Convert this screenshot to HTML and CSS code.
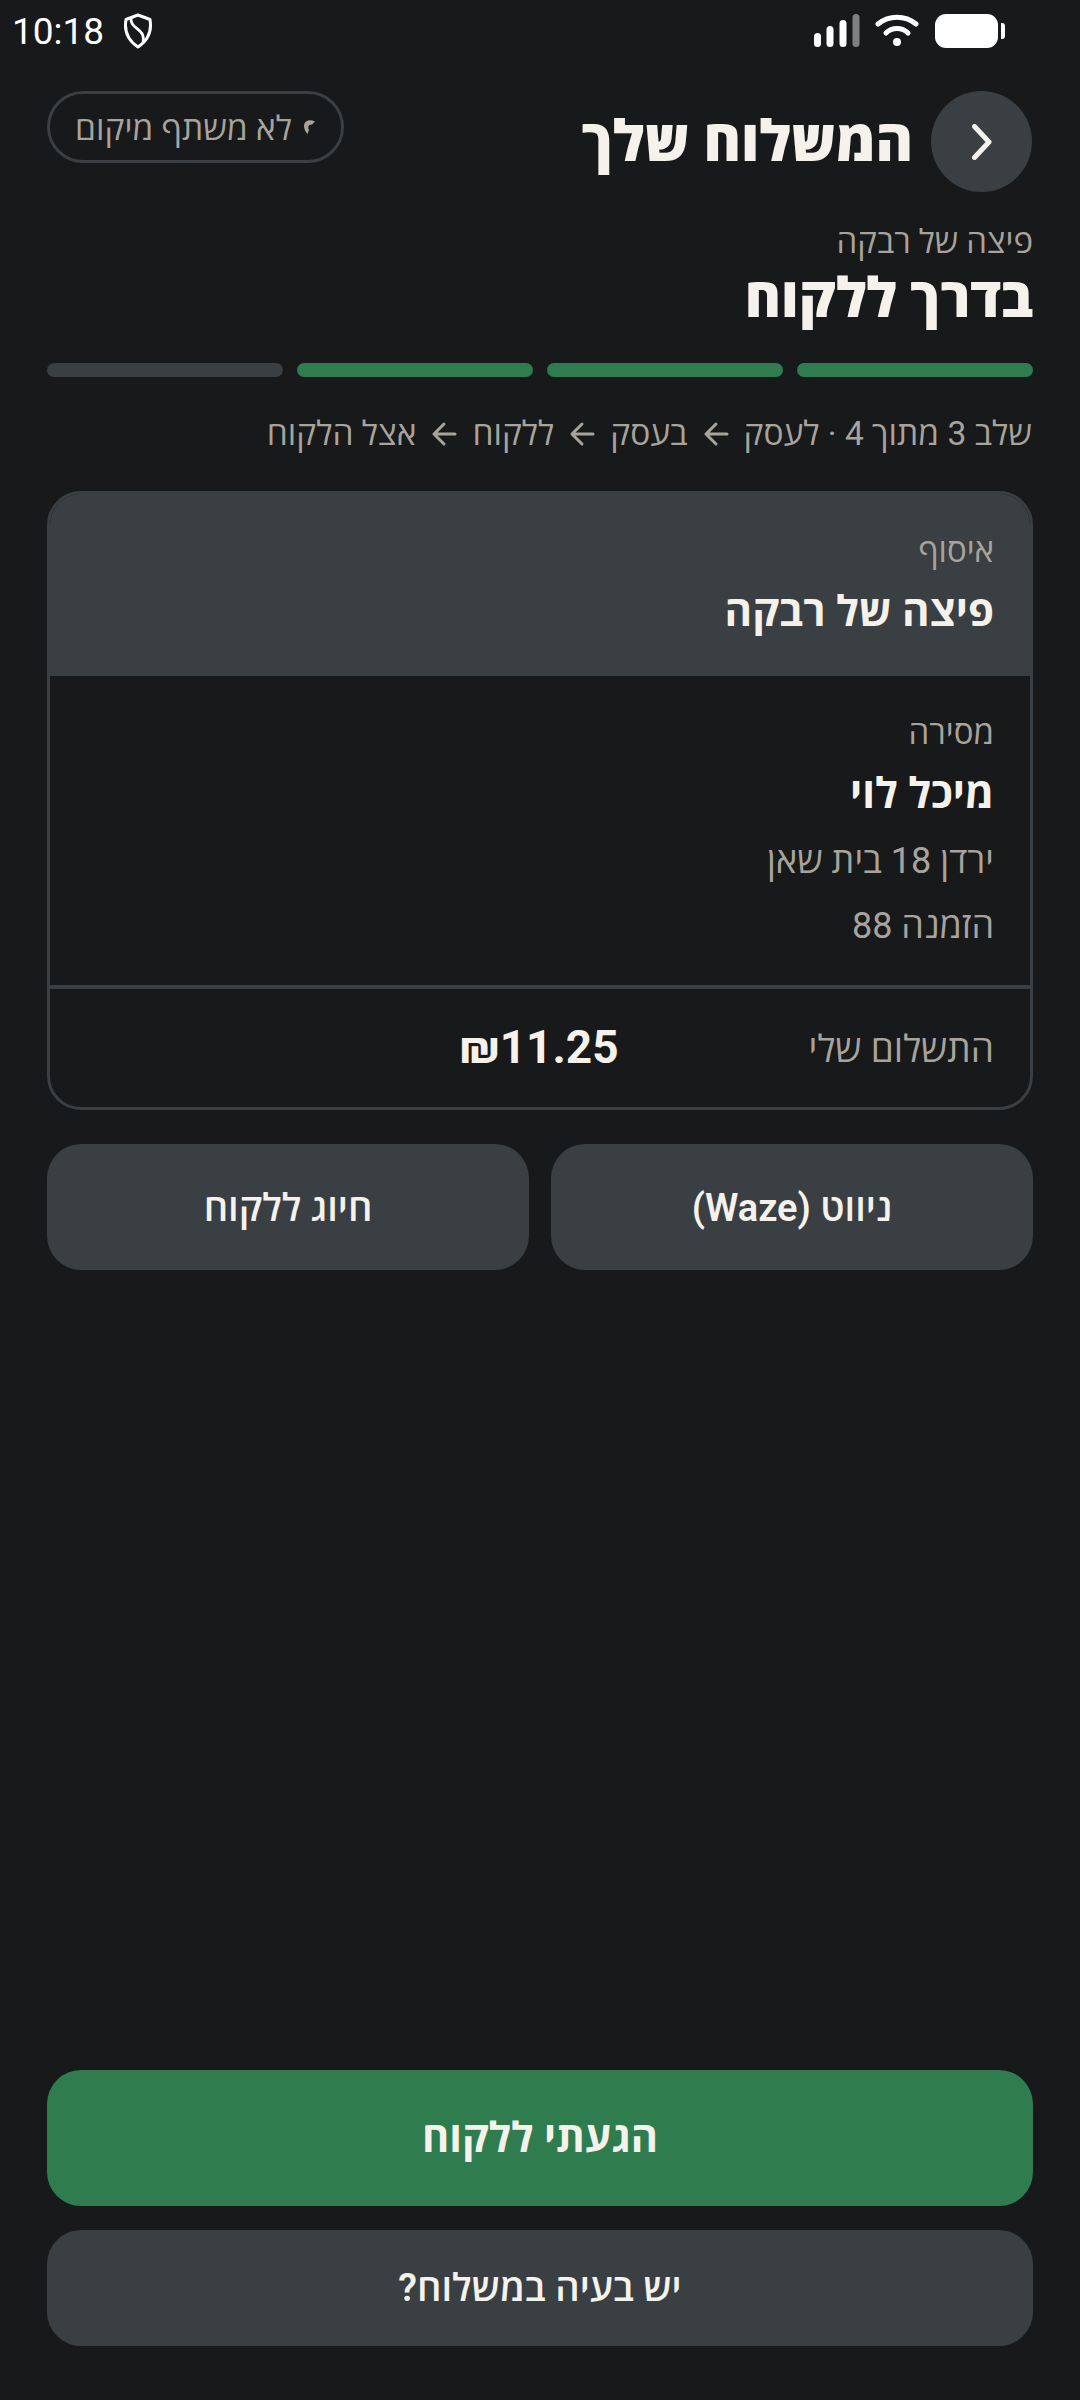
FILE: index.html
```html
<!DOCTYPE html>
<html lang="he" dir="rtl">
<head>
  <meta charset="UTF-8" />
  <meta name="viewport" content="width=device-width, initial-scale=1.0"/>
  <title>המשלוח שלך</title>
  <link rel="stylesheet" href="styles.css">
</head>
<body>

  <div class="status-bar" dir="ltr">
    <div class="status-left">
      <span class="clock">10:18</span>
      <svg class="shield" viewBox="0 0 30 36" fill="none" stroke="#fff" stroke-width="3" stroke-linejoin="round">
        <path d="M15 2 L27 6.5 C28.500 15 27 26 15 34 C3 26 1.500 15 3 6.500 Z"/>
        <path d="M8 5 C7 17 23 14 20 30" stroke-width="2.800"/>
      </svg>
    </div>
    <div class="status-right">
      <svg class="signal" viewBox="0 0 46 34">
        <rect x="0" y="19" width="7" height="14" rx="3.500" fill="#fff"/>
        <rect x="12.500" y="12" width="7" height="21" rx="3.500" fill="#fff"/>
        <rect x="25.500" y="6" width="7" height="27" rx="3.500" fill="#fff"/>
        <rect x="38.500" y="0" width="7" height="33" rx="3.500" fill="#808080"/>
      </svg>
      <svg class="wifi" viewBox="0 0 44 34" fill="none" stroke="#fff" stroke-width="5" stroke-linecap="round">
        <path d="M3 10 C14 1 30 1 41 10"/>
        <path d="M11 19 C17 13 27 13 33 19"/>
        <circle cx="22" cy="28" r="4" fill="#fff" stroke="none"/>
      </svg>
      <div class="battery"></div>
      <div class="battery-cap"></div>
    </div>
  </div>

  <header class="top-row">
    <button class="back-btn">
      <svg viewBox="0 0 20 36" fill="none" stroke="#f5f2ec" stroke-width="5" stroke-linecap="round" stroke-linejoin="round">
        <path d="M2.500 2.500 L17 18 L2.500 33.500"/>
      </svg>
    </button>
    <h1>המשלוח שלך</h1>
    <div class="location-pill">
      <svg class="pin" viewBox="0 0 12 16" fill="#a8a39b">
        <path d="M11 2.500 C5 -0.500 0 2 0 7 C0 10 1.500 13 3.500 15 L5 11 C3.500 8 4.500 5.500 8 5.500 Z"/>
      </svg>
      <span>לא משתף מיקום</span>
    </div>
  </header>

  <section class="status-block">
    <p class="shop-name">פיצה של רבקה</p>
    <h2>בדרך ללקוח</h2>
    <div class="progress">
      <div class="segment done"></div>
      <div class="segment done"></div>
      <div class="segment done"></div>
      <div class="segment"></div>
    </div>
    <p class="steps">
      <span>שלב 3 מתוך 4 · לעסק</span>
      <svg class="arrow" viewBox="0 0 26 26"><path d="M24 13 H3 M13 3 L3 13 L13 23"/></svg>
      <span>בעסק</span>
      <svg class="arrow" viewBox="0 0 26 26"><path d="M24 13 H3 M13 3 L3 13 L13 23"/></svg>
      <span>ללקוח</span>
      <svg class="arrow" viewBox="0 0 26 26"><path d="M24 13 H3 M13 3 L3 13 L13 23"/></svg>
      <span>אצל הלקוח</span>
    </p>
  </section>

  <section class="card">
    <div class="card-pickup">
      <p class="card-label">איסוף</p>
      <p class="card-name">פיצה של רבקה</p>
    </div>
    <div class="card-delivery">
      <p class="card-label">מסירה</p>
      <p class="card-name">מיכל לוי</p>
      <p class="card-detail">ירדן 18 בית שאן</p>
      <p class="card-detail">הזמנה 88</p>
    </div>
    <div class="card-pay">
      <span class="pay-label">התשלום שלי</span>
      <span class="pay-value" dir="ltr">₪11.25</span>
    </div>
  </section>

  <div class="action-row">
    <button class="btn-gray">ניווט (Waze)</button>
    <button class="btn-gray">חיוג ללקוח</button>
  </div>

  <div class="bottom-actions">
    <button class="btn-main">הגעתי ללקוח</button>
    <button class="btn-issue">יש בעיה במשלוח?</button>
  </div>

</body>
</html>
```

FILE: styles.css
```css
* {
  box-sizing: border-box;
}

html,
body {
  margin: 0;
  padding: 0;
  height: 2400px;
}

body {
  background: #17191b;
  color: #f5f2ec;
  font-family: Roboto, "Open Sans", sans-serif;
  display: flex;
  flex-direction: column;
  padding: 0 47px 54px;
  overflow: hidden;
}

p,
h1,
h2 {
  margin: 0;
}

button {
  font-family: inherit;
  border: none;
  color: #f5f2ec;
}

/* status bar */
.status-bar {
  display: flex;
  justify-content: space-between;
  align-items: center;
  height: 60px;
  margin: 0 -47px;
  padding: 2px 75px 0 12px;
  color: #fff;
}

.status-left,
.status-right {
  display: flex;
  align-items: center;
}

.clock {
  font-size: 37px;
  font-weight: 400;
}

.shield {
  width: 30px;
  height: 36px;
  margin-left: 19px;
}

.signal {
  width: 46px;
  height: 34px;
}

.wifi {
  width: 44px;
  height: 34px;
  margin-left: 15px;
}

.battery {
  width: 63px;
  height: 34px;
  margin-left: 16px;
  background: #fff;
  border-radius: 11px;
}

.battery-cap {
  width: 4px;
  height: 16px;
  margin-left: 3px;
  background: #fff;
  border-radius: 0 3px 3px 0;
}

/* header */
.top-row {
  display: flex;
  align-items: flex-start;
  gap: 18px;
  margin-top: 31px;
  padding-right: 1px;
}

.back-btn {
  width: 101px;
  height: 101px;
  border-radius: 50%;
  background: #3a3f43;
  padding: 0;
  display: flex;
  align-items: center;
  justify-content: center;
}

.back-btn svg {
  width: 20px;
  height: 36px;
}

.top-row h1 {
  font-size: 57px;
  font-weight: 800;
  line-height: 101px;
}

.location-pill {
  margin-right: auto;
  height: 72px;
  width: 297px;
  border: 3px solid #3a3f43;
  border-radius: 36px;
  display: flex;
  align-items: center;
  justify-content: center;
  gap: 12px;
  color: #a8a39b;
  font-size: 33.500px;
}

.pin {
  width: 12px;
  height: 16px;
}

/* status */
.status-block {
  margin-top: 30px;
}

.shop-name {
  font-size: 33px;
  line-height: 40px;
  color: #a8a39b;
}

.status-block h2 {
  font-size: 55px;
  font-weight: 800;
  line-height: 66px;
  margin-top: 3px;
}

.progress {
  display: grid;
  grid-template-columns: repeat(4, 1fr);
  gap: 14px;
  margin-top: 32px;
}

.segment {
  height: 14px;
  border-radius: 7px;
  background: #3a3f43;
}

.segment.done {
  background: #2f7d4f;
}

.steps {
  margin-top: 37px;
  font-size: 33.500px;
  line-height: 40px;
  color: #a8a39b;
  display: flex;
  align-items: center;
  gap: 15px;
  padding-right: 1px;
}

.arrow {
  width: 26px;
  height: 26px;
  fill: none;
  stroke: #a8a39b;
  stroke-width: 3;
  stroke-linecap: round;
  stroke-linejoin: round;
}

/* card */
.card {
  margin-top: 37px;
  border: 3px solid #3a3f43;
  border-radius: 34px;
  overflow: hidden;
}

.card-pickup {
  background: #3a3f43;
  height: 182px;
  padding: 37px 36px 0;
}

.card-delivery {
  height: 313px;
  padding: 37px 36px 0;
  border-bottom: 4px solid #3a3f43;
}

.card-label {
  font-size: 33px;
  line-height: 40px;
  color: #a8a39b;
}

.card-name {
  font-size: 42px;
  font-weight: 700;
  line-height: 50px;
  margin-top: 16px;
}

.card-detail {
  font-size: 36px;
  line-height: 44px;
  color: #a8a39b;
  margin-top: 21px;
}

.card-name + .card-detail {
  margin-top: 20px;
}

.card-pay {
  display: flex;
  align-items: center;
  height: 118px;
  padding: 0 36px 2px;
  gap: 190px;
}

.pay-label {
  font-size: 37px;
  color: #a8a39b;
}

.pay-value {
  font-size: 46px;
  font-weight: 700;
}

/* buttons */
.action-row {
  display: grid;
  grid-template-columns: 1fr 1fr;
  gap: 22px;
  margin-top: 34px;
}

.btn-gray {
  height: 126px;
  border-radius: 34px;
  background: #3a3f43;
  font-size: 38px;
  font-weight: 600;
  padding-bottom: 4px;
}

.bottom-actions {
  margin-top: auto;
  display: flex;
  flex-direction: column;
  gap: 24px;
}

.btn-main {
  height: 136px;
  border-radius: 34px;
  background: #2f7d4f;
  font-size: 41.500px;
  font-weight: 700;
  padding-bottom: 6px;
}

.btn-issue {
  height: 116px;
  border-radius: 34px;
  background: #3a3f43;
  font-size: 38px;
  font-weight: 600;
  padding-bottom: 6px;
}
```
